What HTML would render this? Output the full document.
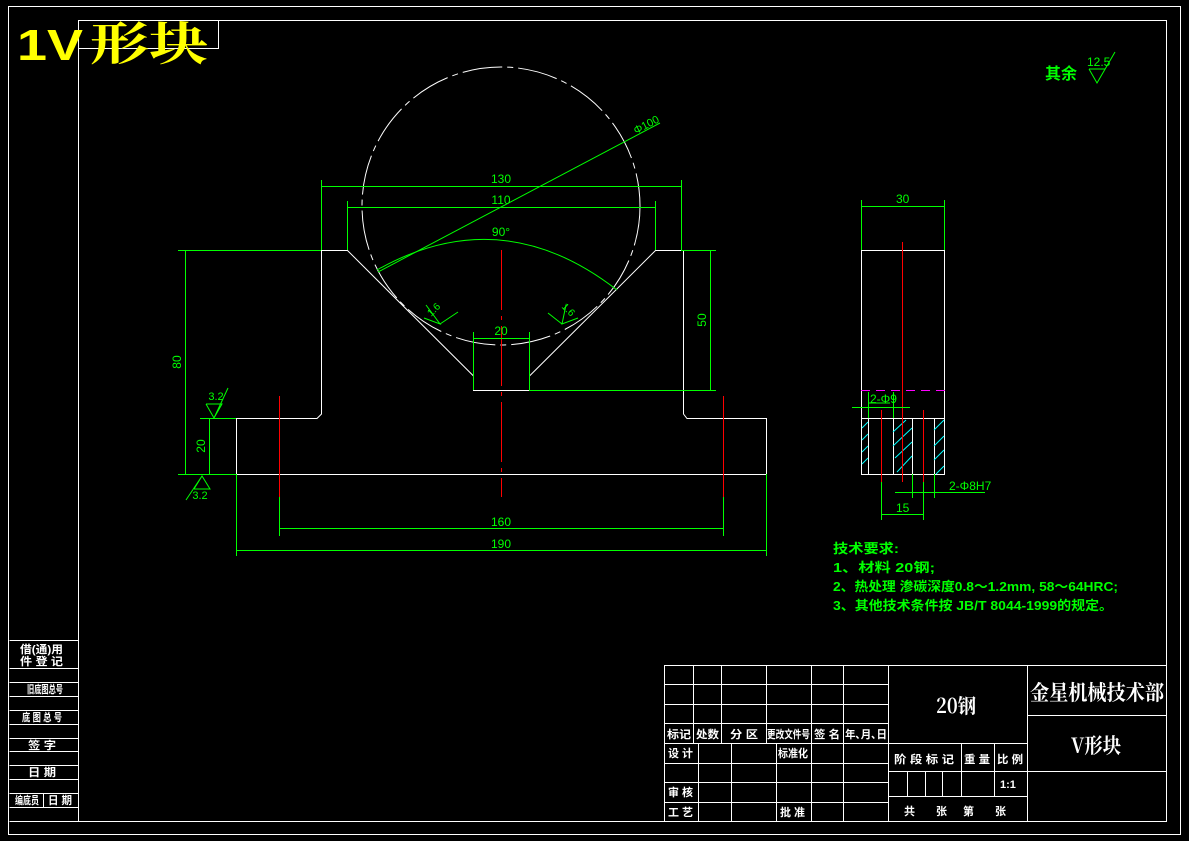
<!DOCTYPE html>
<html><head><meta charset="utf-8"><style>
html,body{margin:0;padding:0;background:#000;width:1189px;height:841px;overflow:hidden}
svg{display:block}
text{font-family:"Liberation Sans","Noto Sans CJK SC",sans-serif}
.w{stroke:#fff;stroke-width:1;fill:none}
.g{stroke:#00ff00;stroke-width:1;fill:none}
.r{stroke:#ff0000;stroke-width:1;fill:none}
.gt{fill:#00ff00;font-size:12px;font-family:"Liberation Sans Narrow","Liberation Sans",sans-serif}
.wt{fill:#fff;font-size:11px;font-weight:bold;font-family:"Noto Sans CJK SC",sans-serif}
</style></head><body>
<svg width="1189" height="841" viewBox="0 0 1189 841" xmlns="http://www.w3.org/2000/svg">
<rect x="8.5" y="6.5" width="1172" height="828" class="w"/>
<rect x="78.5" y="20.5" width="1088" height="801" class="w"/>
<path class="w" d="M78.5 20.5V48.5H218.5V20.5"/>
<text x="17" y="60" fill="#ffff00" font-size="44" font-weight="bold" font-family="Liberation Sans,sans-serif" textLength="66" lengthAdjust="spacingAndGlyphs">1V</text>
<text x="90" y="60" fill="#ffff00" font-size="46" font-weight="bold" style="font-family:'Noto Serif CJK SC','Noto Sans CJK SC',serif" textLength="118" lengthAdjust="spacingAndGlyphs">形块</text>

<path class="w" d="M9.5 640.5H78.5M9.5 668.5H78.5M9.5 682.5H78.5M9.5 696.5H78.5M9.5 710.5H78.5M9.5 724.5H78.5M9.5 738.5H78.5M9.5 751.5H78.5M9.5 765.5H78.5M9.5 779.5H78.5M9.5 793.5H78.5M9.5 807.5H78.5M9.5 821.5H90M43.5 793.5V807.5"/>
<g class="wt" font-size="9">
<text x="20" y="653" textLength="43" lengthAdjust="spacingAndGlyphs">借(通)用</text><text x="20" y="665" textLength="43" lengthAdjust="spacingAndGlyphs">件 登 记</text>
<text x="27" y="693" textLength="36" lengthAdjust="spacingAndGlyphs">旧底图总号</text>
<text x="22" y="721" textLength="40" lengthAdjust="spacingAndGlyphs">底 图 总 号</text>
<text x="28" y="749" textLength="28" lengthAdjust="spacingAndGlyphs">签  字</text>
<text x="28" y="776" textLength="28" lengthAdjust="spacingAndGlyphs">日  期</text>
<text x="15" y="804" textLength="24" lengthAdjust="spacingAndGlyphs">编底员</text><text x="48" y="804" textLength="24" lengthAdjust="spacingAndGlyphs">日 期</text>
</g>

<rect x="664.5" y="665.5" width="502" height="156" class="w"/>
<path class="w" d="M664.5 684.5H888.5M664.5 704.5H888.5M664.5 723.5H888.5M664.5 743.5H888.5M664.5 763.5H888.5M664.5 782.5H888.5M664.5 802.5H888.5
M693.5 665.5V743.5M721.5 665.5V743.5M766.5 665.5V743.5M811.5 665.5V743.5M843.5 665.5V743.5M888.5 665.5V821.5M1027.5 665.5V821.5
M698.5 743.5V821.5M731.5 743.5V821.5M776.5 743.5V821.5M811.5 743.5V821.5M843.5 743.5V821.5
M888.5 743.5H1027.5M888.5 771.5H1027.5M888.5 796.5H1027.5M961.5 743.5V796.5M994.5 743.5V796.5M907.5 771.5V796.5M925.5 771.5V796.5M942.5 771.5V796.5
M1027.5 715.5H1167M1027.5 771.5H1167"/>
<g class="wt" font-size="10">
<text x="667" y="738" textLength="24" lengthAdjust="spacingAndGlyphs">标记</text><text x="696" y="738" textLength="23" lengthAdjust="spacingAndGlyphs">处数</text><text x="730" y="738" textLength="28" lengthAdjust="spacingAndGlyphs">分 区</text><text x="767" y="738" textLength="43" lengthAdjust="spacingAndGlyphs">更改文件号</text><text x="814" y="738" textLength="26" lengthAdjust="spacingAndGlyphs">签 名</text><text x="845" y="738" textLength="42" lengthAdjust="spacingAndGlyphs">年､月､日</text>
<text x="668" y="757" textLength="25" lengthAdjust="spacingAndGlyphs">设 计</text><text x="778" y="757" textLength="30" lengthAdjust="spacingAndGlyphs">标准化</text>
<text x="668" y="796" textLength="25" lengthAdjust="spacingAndGlyphs">审 核</text><text x="668" y="816" textLength="25" lengthAdjust="spacingAndGlyphs">工 艺</text><text x="780" y="816" textLength="25" lengthAdjust="spacingAndGlyphs">批 准</text>
<text x="894" y="763" textLength="60" lengthAdjust="spacingAndGlyphs">阶 段 标 记</text><text x="964" y="763" textLength="26" lengthAdjust="spacingAndGlyphs">重 量</text><text x="997" y="763" textLength="26" lengthAdjust="spacingAndGlyphs">比 例</text>
<text x="1000" y="788">1:1</text>
<text x="904" y="815">共</text><text x="936" y="815">张</text><text x="963" y="815">第</text><text x="995" y="815">张</text>
</g>
<text x="936" y="713" fill="#fff" font-size="20" font-weight="bold" style="font-family:'Noto Serif CJK SC',serif" textLength="40" lengthAdjust="spacingAndGlyphs">20钢</text>
<text x="1030" y="700" fill="#fff" font-size="21" font-weight="bold" style="font-family:'Noto Serif CJK SC',serif" textLength="134" lengthAdjust="spacingAndGlyphs">金星机械技术部</text>
<text x="1071" y="753" fill="#fff" font-size="21" font-weight="bold" style="font-family:'Noto Serif CJK SC',serif" textLength="50" lengthAdjust="spacingAndGlyphs">V形块</text>

<text x="1045" y="79" fill="#00ff00" font-size="16" font-weight="bold" font-family="Noto Sans CJK SC,sans-serif">其余</text>
<text x="1087" y="66" class="gt" font-size="11">12.5</text>
<path class="g" d="M1089 69H1105M1089 69L1097 83L1115 52"/>

<circle cx="501" cy="206" r="139" class="w" stroke-dasharray="40 5 6 5"/>
<path class="w" d="M236.5 474.5H766.5V418.5H687L683.5 414V250.5H655.5L529.5 376V390.5H473.5V376L347.5 250.5H321.5V414L317 418.5H236.5Z"/>
<path class="r" stroke-dasharray="60 6 4 6" d="M501.5 250V497"/>
<path class="r" d="M279.5 396V497M723.5 396V497"/>
<g class="g">
<path d="M321.5 250V180M681.5 250V180M321 186.5H681"/>
<path d="M347.5 250V201M655.5 250V201M347 207.5H655"/>
<path d="M377 270Q501 200 617 290"/>
<path d="M378 272L660 123"/>
<path d="M178 250.5H321M185.5 250V474M178 474.5H236M209.5 418V474M200 418.5H236"/>
<path d="M681 250.5H716M710.5 250V390M529 390.5H716"/>
<path d="M473.5 390V332M529.5 390V332M473 338.5H529"/>
<path d="M279.5 497V536M723.5 497V536M279 528.5H723"/>
<path d="M236.5 474V556M766.5 474V556M236 550.5H766"/>
<path d="M206 404L214 418L222 404H206M214 418L228 388"/>
<path d="M194 489L202 476L210 489H194M202 476L186 500"/>
<path d="M424 318L440 324L426 305M440 324L458 312"/>
<path d="M578 318L562 324L566 305M562 324L548 313"/>
</g>
<g class="gt" text-anchor="middle">
<text x="501" y="183">130</text><text x="501" y="204">110</text><text x="501" y="236">90°</text>
<text x="501" y="335">20</text><text x="501" y="526">160</text><text x="501" y="548">190</text>
<text x="648" y="128" transform="rotate(-28 648 128)" font-size="11">Φ100</text>
<text x="181" y="362" transform="rotate(-90 181 362)">80</text>
<text x="205" y="446" transform="rotate(-90 205 446)">20</text>
<text x="706" y="320" transform="rotate(-90 706 320)">50</text>
<text x="216" y="400" font-size="11">3.2</text><text x="200" y="499" font-size="11">3.2</text>
<text x="436" y="312" transform="rotate(-45 436 312)" font-size="10">1.6</text>
<text x="566" y="312" transform="rotate(45 566 312)" font-size="10">1.6</text>
</g>

<rect x="861.5" y="250.5" width="83" height="224" class="w"/>
<path d="M861 390.5H945" stroke="#ff00ff" stroke-dasharray="9 6"/>
<path class="w" d="M861 418.5H945M868.5 418V474M893.5 418V474M912.5 418V474M934.5 418V474"/>
<path stroke="#00ffff" stroke-width="1" d="M862 428L868 422M862 440L868 434M862 452L868 446M862 464L868 458M893 432L906 420M893 446L912 428M895 458L912 442M897 472L912 456M934 430L944 420M934 446L944 436M934 460L944 450M936 474L944 466"/>
<path class="r" d="M902.5 242V482M881.5 410V482M923.5 410V482"/>
<g class="g">
<path d="M861.5 250V200M944.5 250V200M861 206.5H944"/>
<path d="M852 407.5H910M868.5 392V418M893.5 392V418M868 403H890"/>
<path d="M881.5 482V520M923.5 482V520M881 514.5H923"/>
<path d="M912.5 474V498M934.5 474V498M895 492.5H985"/>
</g>
<g class="gt">
<text x="896" y="203">30</text><text x="870" y="403">2-Φ9</text><text x="896" y="512">15</text><text x="949" y="490">2-Φ8H7</text>
</g>

<g fill="#00ff00" font-size="13" font-weight="bold" font-family="Liberation Mono,Noto Sans CJK SC,monospace">
<text x="833" y="553" textLength="66" lengthAdjust="spacingAndGlyphs">技术要求:</text>
<text x="833" y="572" textLength="102" lengthAdjust="spacingAndGlyphs">1、材料 20钢;</text>
<text x="833" y="591" textLength="285" lengthAdjust="spacingAndGlyphs">2、热处理 渗碳深度0.8～1.2mm, 58～64HRC;</text>
<text x="833" y="610" textLength="280" lengthAdjust="spacingAndGlyphs">3、其他技术条件按 JB/T 8044-1999的规定。</text>
</g>
</svg>
</body></html>
